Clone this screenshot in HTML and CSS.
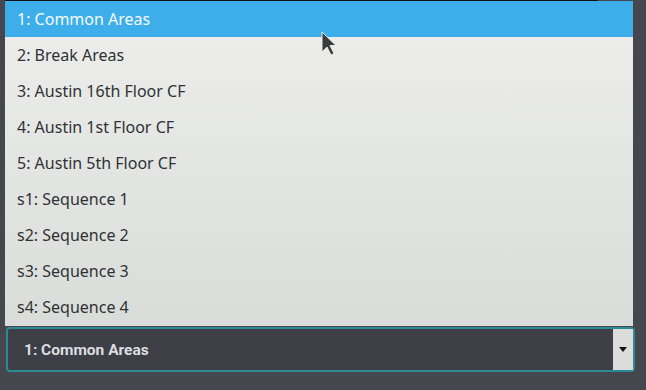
FILE: index.html
```html
<!DOCTYPE html>
<html lang="en">
<head>
  <meta charset="UTF-8">
  <title>Area Select</title>
  <link rel="stylesheet" href="styles.css">
</head>
<body>
  <div class="screen">
    <div class="topbar"></div>
    <ul class="options">
      <li class="option selected">1: Common Areas</li>
      <li class="option">2: Break Areas</li>
      <li class="option">3: Austin 16th Floor CF</li>
      <li class="option">4: Austin 1st Floor CF</li>
      <li class="option">5: Austin 5th Floor CF</li>
      <li class="option">s1: Sequence 1</li>
      <li class="option">s2: Sequence 2</li>
      <li class="option">s3: Sequence 3</li>
      <li class="option">s4: Sequence 4</li>
    </ul>
    <div class="select-box">
      <span class="select-value">1: Common Areas</span>
      <span class="select-btn">
        <svg width="8" height="5" viewBox="0 0 8 5"><path d="M0 0h8L4 5z" fill="#111"/></svg>
      </span>
    </div>
    <!-- mouse pointer over the list -->
    <svg class="pointer" width="16" height="26" viewBox="0 0 16 26">
      <path d="M1 1v20l5-5 4 8 3-1.5-4-8h6z" fill="#3a3b3d" stroke="#e8e8e8" stroke-width="1"/>
    </svg>
  </div>
</body>
</html>
```

FILE: styles.css
```css
body {
  margin: 0;
  background: #45464e;
  font-family: "Noto Sans", "Open Sans", sans-serif;
}
.screen {
  position: relative;
  width: 646px;
  height: 390px;
  overflow: hidden;
}
.topbar {
  height: 1px;
  width: 593px;
  margin-left: 5px;
  background: #111;
}
.options {
  list-style: none;
  margin: 0 13px 0 5px;
  padding: 0 0 1px;
  background: linear-gradient(#eeefed, #dadcd9);
}
.option {
  height: 36px;
  line-height: 36px;
  padding-left: 12px;
  font-size: 16px;
  color: #2f3235;
}
.option.selected {
  background: #3daee9;
  color: #f4fbff;
}
.select-box {
  display: flex;
  align-items: stretch;
  height: 41px;
  margin: 1px 11px 0 6px;
  border: 2px solid #2b8a93;
  border-radius: 4px;
  background: #3e3f46;
}
.select-value {
  flex: 1;
  display: flex;
  align-items: center;
  padding-left: 16px;
  font-family: Roboto, "Noto Sans", sans-serif;
  font-weight: bold;
  font-size: 15.5px;
  color: #dcdde0;
}
.select-btn {
  width: 20px;
  display: flex;
  align-items: center;
  justify-content: center;
  background: #dcdddb;
}
.pointer {
  position: absolute;
  left: 321px;
  top: 31px;
}
```
